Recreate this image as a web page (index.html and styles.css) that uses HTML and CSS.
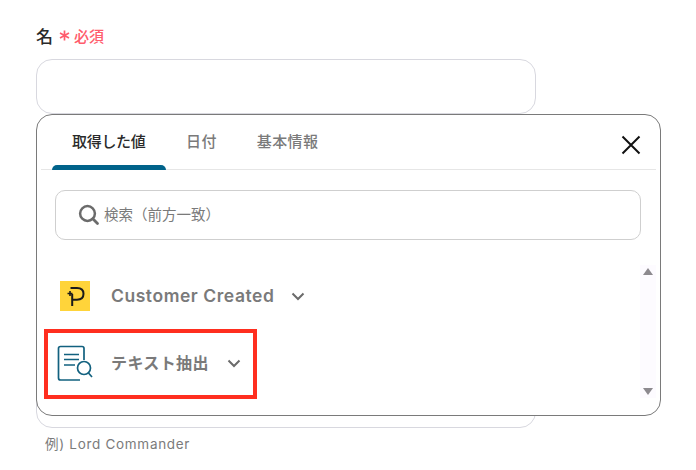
FILE: index.html
```html
<!DOCTYPE html>
<html lang="ja">
<head>
<meta charset="utf-8">
<title>名</title>
<link rel="stylesheet" href="styles.css">
</head>
<body>
<main class="form">
  <div class="label"><span class="label-name">名</span><span class="req"><svg class="ast" width="11" height="11" viewBox="0 0 11 11"><path d="M5.5 0.5V10.5M1 3L10 8M10 3L1 8" stroke="#ff5c6c" stroke-width="1.7" fill="none"/></svg>必須</span></div>
  <div class="input"></div>
  <div class="input-rest"></div>
  <div class="hint">例) Lord Commander</div>

  <section class="pop">
    <div class="tabs">
      <div class="tab active">取得した値</div>
      <div class="tab">日付</div>
      <div class="tab">基本情報</div>
      <svg class="close" width="20" height="20" viewBox="0 0 20 20"><path d="M1.5 1.5L18.5 18.5M18.5 1.5L1.5 18.5" stroke="#111" stroke-width="2" fill="none"/></svg>
    </div>
    <div class="search">
      <svg width="22" height="22" viewBox="0 0 22 22"><circle cx="9.5" cy="9.5" r="7.4" fill="none" stroke="#6b6b6b" stroke-width="2.5"/><path d="M14.8 14.8L19.5 19.5" stroke="#6b6b6b" stroke-width="2.8" stroke-linecap="round"/></svg>
      <span>検索（前方一致）</span>
    </div>
    <div class="list">
      <div class="row row-p">
        <svg class="logo" width="30" height="30" viewBox="0 0 30 30"><rect width="30" height="30" fill="#ffd43a"/><path d="M10.5 7H17C21 7 23.5 9.2 23.5 12.8C23.5 16.4 21 18.7 17 18.7H12.2M12.2 13V25" fill="none" stroke="#1a1a1a" stroke-width="2"/><path d="M7.5 12.5H12.5M10 10V15" stroke="#1a1a1a" stroke-width="1.6"/></svg>
        <span class="name">Customer Created</span>
        <svg class="chev" width="14" height="9" viewBox="0 0 14 9"><path d="M1.5 1.5L7 7L12.5 1.5" fill="none" stroke="#6b6b6b" stroke-width="2"/></svg>
      </div>
      <div class="row row-t">
        <svg class="logo" width="36" height="37" viewBox="0 0 36 37"><path d="M27 15V3.5C27 2.4 26.1 1.5 25 1.5H3.5C2.4 1.5 1.5 2.4 1.5 3.5V33C1.5 34.1 2.4 35 3.5 35H23" fill="none" stroke="#12617f" stroke-width="1.7"/><path d="M7 9.5H22M7 14.5H22M7 20H18" stroke="#12617f" stroke-width="1.5"/><circle cx="27" cy="23" r="6.5" fill="none" stroke="#12617f" stroke-width="1.7"/><path d="M31.5 28L35 32" stroke="#12617f" stroke-width="1.7"/></svg>
        <span class="name">テキスト抽出</span>
        <svg class="chev" width="14" height="9" viewBox="0 0 14 9"><path d="M1.5 1.5L7 7L12.5 1.5" fill="none" stroke="#6b6b6b" stroke-width="2"/></svg>
      </div>
      <div class="scroll">
        <span class="arrow up"></span>
        <span class="arrow down"></span>
      </div>
    </div>
  </section>
  <div class="mark"></div>
</main>
</body>
</html>
```
FILE: styles.css
```css
* { box-sizing: border-box; }
html, body { margin: 0; background: #fff; }
body {
  width: 696px;
  height: 470px;
  overflow: hidden;
  font-family: Inter, "Noto Sans CJK JP", sans-serif;
}
.form {
  position: relative;
  height: 470px;
  padding: 25px 0 0 36px;
}
.label {
  display: flex;
  align-items: center;
  height: 20px;
  color: #2a2a2a;
  font-size: 17px;
  font-weight: 500;
}
.req {
  display: flex;
  align-items: center;
  margin-left: 6px;
  color: #ff5c6c;
  font-size: 15px;
  font-weight: 500;
}
.ast { margin-right: 4px; margin-top: 1px; }
.input {
  width: 500px;
  height: 55px;
  margin-top: 14px;
  border: 1px solid #d8d8df;
  border-radius: 16px;
}
.input-rest {
  width: 500px;
  height: 56px;
  margin-top: 258px;
  border: 1px solid #d8d8df;
  border-radius: 16px;
}
.hint {
  margin-top: 7px;
  padding-left: 9px;
  color: #7b7b7b;
  font-size: 13.5px;
  line-height: 18px;
  letter-spacing: 0.7px;
}
.pop {
  position: absolute;
  left: 36px;
  top: 114px;
  width: 625px;
  height: 302px;
  background: #fff;
  border: 1px solid #7a7a7a;
  border-radius: 16px;
}
.tabs {
  position: relative;
  display: flex;
  align-items: center;
  height: 55px;
  margin: 0 4px;
  padding-left: 11px;
  border-bottom: 1px solid #e6e6e6;
}
.tab {
  position: relative;
  height: 54px;
  padding: 0 20px;
  color: #7a7a7a;
  font-size: 15px;
  line-height: 54px;
  font-weight: 500;
  letter-spacing: 0.4px;
}
.tab.active { color: #2a2a2a; width: 114px; white-space: nowrap; letter-spacing: -0.3px; }
.tab.active::after {
  content: "";
  position: absolute;
  left: 0;
  right: 0;
  bottom: -1px;
  height: 5px;
  background: #00638a;
  border-radius: 5px 5px 0 0;
}
.close { position: absolute; right: 15px; top: 20px; }
.search {
  display: flex;
  align-items: center;
  gap: 4px;
  width: 586px;
  height: 50px;
  margin: 20px 0 0 18px;
  padding: 0 0 3px 22px;
  border: 1px solid #cfcfcf;
  border-radius: 10px;
  color: #7a7a7a;
  font-size: 14.5px;
}
.search svg { margin-top: 2px; }
.list {
  position: relative;
  display: flow-root;
  height: 175px;
  padding-left: 2px;
}
.row {
  display: flex;
  align-items: center;
}
.row-p { height: 52px; margin-top: 30px; padding-left: 21px; }
.row-t { height: 60px; margin-top: 11px; padding-left: 18px; }
.name {
  color: #7a7a7a;
  font-size: 17.5px;
  font-weight: 600;
  letter-spacing: 0.55px;
}
.row-p .name { margin-left: 21px; padding-bottom: 1px; }
.row-t .name { margin-left: 18px; padding-bottom: 2px; font-size: 16px; letter-spacing: 0.4px; }
.chev { margin-left: 17px; }
.row-t .chev { margin-left: 18px; }
.scroll {
  position: absolute;
  right: 4px;
  top: 25px;
  bottom: 17px;
  width: 16px;
  display: flex;
  flex-direction: column;
  justify-content: space-between;
  align-items: center;
  padding: 3px 0;
  background: #fdfbff;
}
.arrow {
  width: 0;
  height: 0;
  border-left: 5px solid transparent;
  border-right: 5px solid transparent;
}
.arrow.up { border-bottom: 7px solid #8d8a8f; }
.arrow.down { border-top: 7px solid #8d8a8f; }
.mark {
  position: absolute;
  left: 44px;
  top: 329px;
  width: 213px;
  height: 70px;
  border: 4px solid #ff2e1f;
}
```
